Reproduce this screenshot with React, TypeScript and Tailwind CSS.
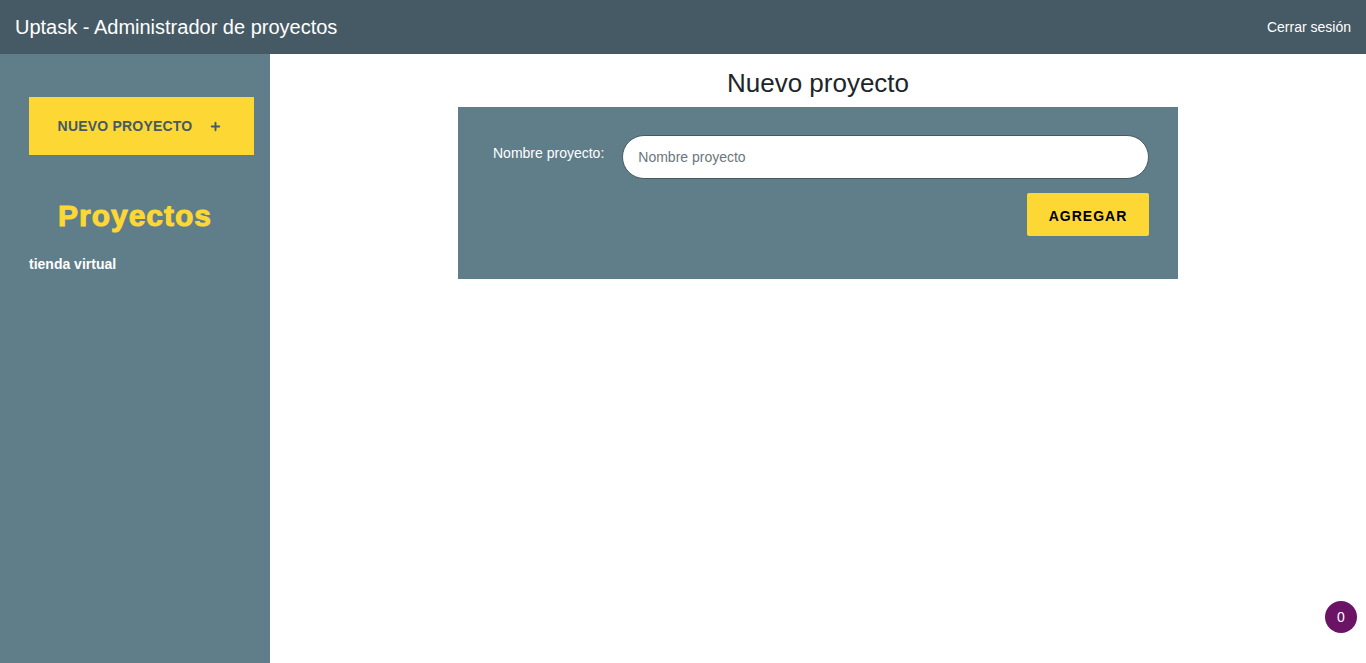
import { Plus } from "lucide-react";

const App = () => {
  const proyectos = ["tienda virtual"];
  return (
    <div className="flex flex-col h-[663px] w-full font-['Liberation_Sans',Arial,sans-serif]">
      <header className="flex items-center justify-between h-[54px] bg-[#465a65] px-[15px] shrink-0">
        <h1 className="text-white text-[20px] leading-none">Uptask - Administrador de proyectos</h1>
        <a className="text-white text-[14px] cursor-pointer">Cerrar sesión</a>
      </header>
      <div className="flex flex-1 min-h-0">
        <aside className="w-[270px] shrink-0 bg-[#607d8a] pt-[43px]">
          <button className="ml-[29px] w-[225px] h-[58px] bg-[#fdd835] flex items-center justify-center gap-[17px] pr-[3px] text-[#455a64] font-bold text-[14px] tracking-[0.2px]">
            NUEVO PROYECTO
            <Plus size={13} strokeWidth={3.5} />
          </button>
          <h2 className="mt-[43px] text-center text-[#fdd835] text-[30px] font-bold tracking-[1px] leading-[36px] [-webkit-text-stroke:1px_#fdd835]">
            Proyectos
          </h2>
          <ul className="mt-[20px] px-[29px]">
            {proyectos.map((p) => (
              <li key={p} className="text-white font-bold text-[14px]">
                {p}
              </li>
            ))}
          </ul>
        </aside>
        <main className="flex-1 relative">
          <h2 className="pt-[14px] text-center text-[26px] leading-[31px] text-[#212529]">Nuevo proyecto</h2>
          <form className="mx-auto mt-[8px] w-[720px] bg-[#607d8a] pl-[35px] pr-[29px] pt-[28px] pb-[43px]">
            <div className="flex items-start gap-[18px]">
              <label className="text-white text-[14px] pt-[8px]">Nombre proyecto:</label>
              <input
                type="text"
                placeholder="Nombre proyecto"
                className="flex-1 h-[44px] rounded-full bg-white border border-[#455a64] px-[15px] text-[14px] placeholder:text-[#6c757d] outline-none"
              />
            </div>
            <div className="flex justify-end mt-[14px]">
              <button type="button" className="w-[122px] h-[43px] pt-[3px] bg-[#fdd835] rounded-[2px] text-black font-bold text-[14px] tracking-[1px]">
                AGREGAR
              </button>
            </div>
          </form>
          <div className="absolute right-[9px] bottom-[30px] w-[32px] h-[32px] rounded-full bg-[#6b1466] text-white text-[14px] flex items-center justify-center">
            0
          </div>
        </main>
      </div>
    </div>
  );
};

export default App;
